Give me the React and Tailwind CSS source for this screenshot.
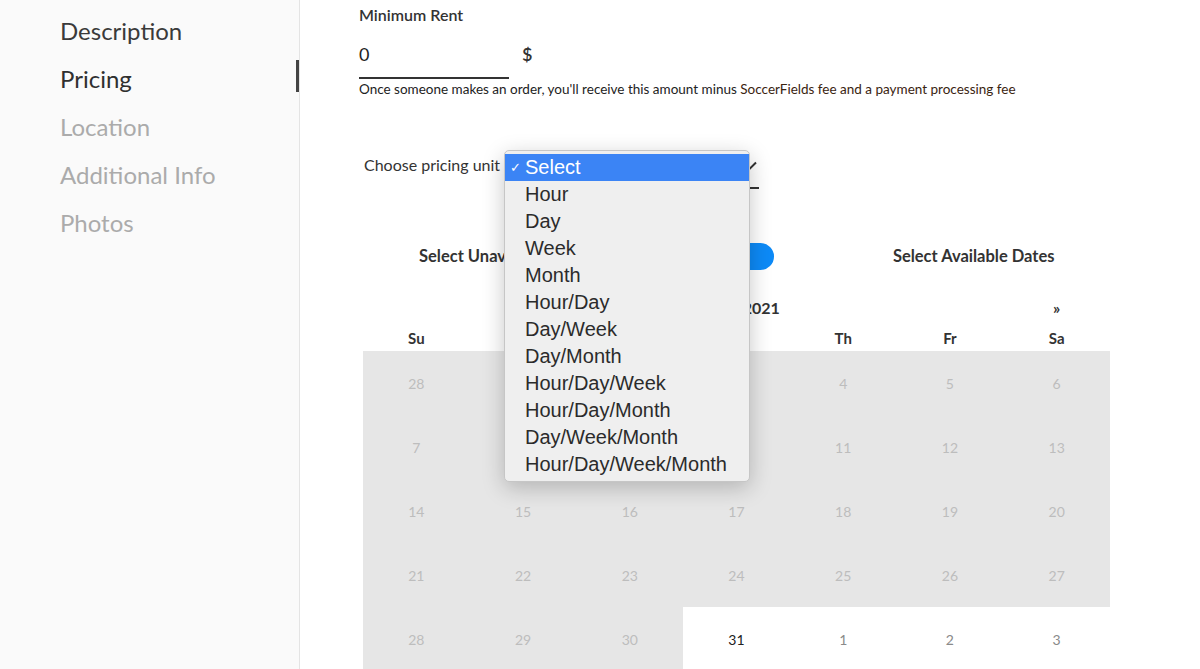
import React from "react";

const navItems = [
  { label: "Description", cls: "text-[#3a3a3a]" },
  { label: "Pricing", cls: "text-[#2f2f2f]", active: true },
  { label: "Location", cls: "text-[#ababab]" },
  { label: "Additional Info", cls: "text-[#ababab]" },
  { label: "Photos", cls: "text-[#ababab]" },
];

const options = [
  "Select",
  "Hour",
  "Day",
  "Week",
  "Month",
  "Hour/Day",
  "Day/Week",
  "Day/Month",
  "Hour/Day/Week",
  "Hour/Day/Month",
  "Day/Week/Month",
  "Hour/Day/Week/Month",
];

const weeks = [
  [28, 1, 2, 3, 4, 5, 6],
  [7, 8, 9, 10, 11, 12, 13],
  [14, 15, 16, 17, 18, 19, 20],
  [21, 22, 23, 24, 25, 26, 27],
  [28, 29, 30, 31, 1, 2, 3],
];

const days = ["Su", "Mo", "Tu", "We", "Th", "Fr", "Sa"];

export default function App() {
  return (
    <div
      className="flex h-screen w-full overflow-hidden bg-white"
      style={{ fontFamily: "Lato, 'Open Sans', sans-serif" }}
    >
      {/* Sidebar */}
      <aside className="w-[300px] shrink-0 bg-[#fafafa] border-r border-[#e4e4e4] pt-[7px]">
        {navItems.map((n) => (
          <div key={n.label} className="flex h-[48px] items-center justify-between pl-[60px]">
            <span className={`text-[24px] leading-[48px] ${n.cls}`}>{n.label}</span>
            {n.active && <span className="mb-[6px] h-[32px] w-[3px] bg-[#444]" />}
          </div>
        ))}
      </aside>

      {/* Main */}
      <main className="flex-1 pl-[59px]">
        <div className="pt-[5px] text-[16px] leading-[20px] font-semibold text-[#333]">Minimum Rent</div>

        <div className="mt-[17px] flex items-start">
          <div className="w-[150px] border-b-2 border-[#333] pb-[11px] text-[18px] leading-[24px] text-[#222]">0</div>
          <div className="ml-[13px] text-[18px] leading-[24px] font-semibold text-[#333]">$</div>
        </div>

        <div className="mt-[2px] text-[13.5px] leading-[16px] text-[#222]">
          Once someone makes an order, you'll receive this amount minus{" "}
          <span className="text-[#3a2410]">SoccerFields fee and a payment processing fee</span>
        </div>

        {/* Pricing unit */}
        <div className="mt-[53px] flex h-[40px] items-start pl-[5px]">
          <span className="w-[141px] whitespace-nowrap pt-[5px] text-[16px] leading-[20px] text-[#333]">
            Choose pricing unit
          </span>
          <div className="relative h-[39px] w-[254px] border-b-2 border-[#333]">
            <div className="flex h-[37px] items-center justify-between pl-[4px] pr-[2px] text-[15px] text-[#333]">
              <span>Select</span>
              <svg width="12" height="10" viewBox="0 0 12 10" className="mb-[6px]">
                <path d="M1 6 L4 8.5 L11 1.5" stroke="#333" strokeWidth="2" fill="none" />
              </svg>
            </div>
            {/* open dropdown menu */}
            <div
              className="absolute left-[-1px] top-0 z-10 w-[246px] rounded-[5px] border border-[#c6c6c6] bg-[#efefef] py-[3px] shadow-[0_6px_22px_rgba(0,0,0,0.22)]"
              style={{ fontFamily: "'Liberation Sans', Arial, sans-serif" }}
            >
              {options.map((o, i) => (
                <div
                  key={o}
                  className={`relative flex h-[27px] items-center pl-[20px] text-[20px] leading-[27px] ${
                    i === 0 ? "bg-[#3b84f5] text-white" : "text-[#2b2b2b]"
                  }`}
                >
                  {i === 0 && <span className="absolute left-[5px] text-[13px]">✓</span>}
                  {o}
                </div>
              ))}
            </div>
          </div>
        </div>

        {/* Toggle row */}
        <div className="mt-[53px] flex h-[27px] w-[751px] items-center">
          <span className="ml-[60px] whitespace-nowrap text-[16.5px] font-bold text-[#333]">
            Select Unavailable Dates
          </span>
          <div className="ml-[122px] flex h-[27px] w-[52px] items-center rounded-full bg-[#0d8af7] px-[3px]">
            <span className="h-[21px] w-[21px] rounded-full bg-white" />
          </div>
          <span className="ml-[119px] whitespace-nowrap text-[16.5px] font-bold text-[#333]">
            Select Available Dates
          </span>
        </div>

        {/* Calendar */}
        <div className="ml-[4px] w-[747px]">
          <div className="mt-[26px] grid h-[20px] grid-cols-7 items-center text-[16px] font-bold text-[#333]">
            <span />
            <span />
            <span />
            <span className="whitespace-nowrap text-center">March 2021</span>
            <span />
            <span />
            <span className="text-center text-[16px]">»</span>
          </div>
          <div className="mt-[11px] grid h-[20px] grid-cols-7 items-center text-[15px] font-bold text-[#333]">
            {days.map((d) => (
              <span key={d} className="text-center">
                {d}
              </span>
            ))}
          </div>
          <div className="mt-[4px] grid grid-cols-7">
            {weeks.flatMap((w, wi) =>
              w.map((d, di) => {
                const past = wi < 4 || di < 3;
                const today = wi === 4 && di === 3;
                return (
                  <div
                    key={`${wi}-${di}`}
                    className={`flex h-[64px] items-center justify-center text-[14px] ${
                      past ? "bg-[#e6e6e6] text-[#bdbdbd]" : "bg-white"
                    } ${today ? "text-[#222]" : !past ? "text-[#8a8a8a]" : ""}`}
                  >
                    {d}
                  </div>
                );
              })
            )}
          </div>
        </div>
      </main>
    </div>
  );
}
